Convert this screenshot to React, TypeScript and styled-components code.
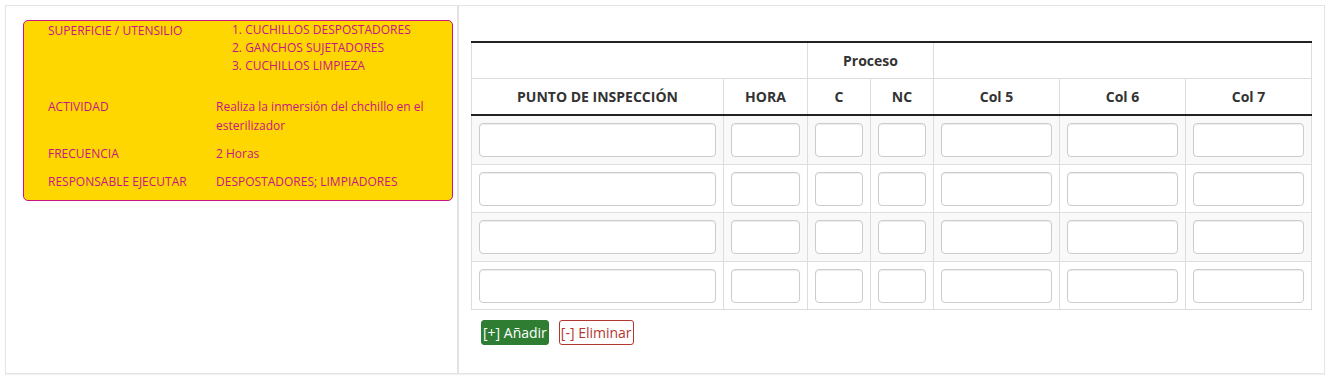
import styled, { createGlobalStyle } from "styled-components";

const GlobalStyle = createGlobalStyle`
  html, body {
    margin: 0;
    padding: 0;
    background: #fff;
  }

  body {
    font-family: "Open Sans", "Liberation Sans", sans-serif;
    color: #333;
  }

  * {
    box-sizing: border-box;
  }
`;

const Page = styled.div`
  display: flex;
  align-items: stretch;
  padding: 5px;
  width: 1331px;
`;

const Panel = styled.section<{ $width: number }>`
  flex: 0 0 ${(p) => p.$width}px;
  border: 1px solid #e4e4e4;
  box-shadow: 0 1px 1px rgba(0, 0, 0, 0.06);
  background: #fff;
`;

const LeftPanel = styled(Panel)`
  padding: 14px 4px 0 17px;
`;

const RightPanel = styled(Panel)`
  padding: 35px 12px 28px 12px;
`;

const InfoCard = styled.div`
  display: grid;
  grid-template-columns: 168px 1fr;
  row-gap: 9px;
  padding: 0 20px 9px 24px;
  background: #ffd700;
  border: 1px solid #c71585;
  border-radius: 5px;
  color: #c71585;
  font-size: 12px;
  line-height: 19px;
`;

const InfoLabel = styled.div`
  text-transform: uppercase;
`;

const InfoValue = styled.div``;

const ItemList = styled.ol`
  margin: 0 0 13px 0;
  padding: 0 0 0 16px;
  list-style-position: inside;
  line-height: 18px;
`;

const Table = styled.table`
  width: 100%;
  border-collapse: collapse;
  table-layout: fixed;
`;

const HeadCell = styled.th`
  padding: 8px;
  line-height: 19px;
  font-size: 14px;
  font-weight: 700;
  color: #333;
  text-align: center;
  border: 1px solid #ddd;
`;

const HeadRow = styled.tr<{ $first?: boolean }>`
  & > th {
    ${(p) => (p.$first ? "border-top: 2px solid #222;" : "border-bottom: 2px solid #222;")}
  }
`;

const BodyRow = styled.tr`
  &:nth-child(odd) {
    background: #f9f9f9;
  }
`;

const BodyCell = styled.td`
  padding: 7px 7px 6.5px;
  border: 1px solid #ddd;
`;

const Field = styled.input`
  display: block;
  width: 100%;
  height: 34px;
  padding: 6px 10px;
  border: 1px solid #ccc;
  border-radius: 4px;
  background: #fff;
  box-shadow: inset 0 1px 1px rgba(0, 0, 0, 0.075);
  font: inherit;
`;

const Actions = styled.div`
  display: flex;
  gap: 10px;
  margin: 10px 0 0 10px;
`;

const ActionButton = styled.button<{ $variant: "add" | "remove" }>`
  height: 25px;
  padding: 0 1px;
  border-radius: 3px;
  font-family: "Open Sans", "Liberation Sans", sans-serif;
  font-size: 14px;
  line-height: 23px;
  cursor: pointer;
  border: 1px solid ${(p) => (p.$variant === "add" ? "#2e7d32" : "#b3372f")};
  background: ${(p) => (p.$variant === "add" ? "#2e7d32" : "#fff")};
  color: ${(p) => (p.$variant === "add" ? "#fff" : "#b3372f")};
`;

const info = [
  { label: "ACTIVIDAD", value: "Realiza la inmersión del chchillo en el esterilizador" },
  { label: "FRECUENCIA", value: "2 Horas" },
  { label: "RESPONSABLE EJECUTAR", value: "DESPOSTADORES; LIMPIADORES" },
];

const items = ["CUCHILLOS DESPOSTADORES", "GANCHOS SUJETADORES", "CUCHILLOS LIMPIEZA"];

const columns = [
  { title: "PUNTO DE INSPECCIÓN", width: "30%" },
  { title: "HORA", width: "10%" },
  { title: "C", width: "7.5%" },
  { title: "NC", width: "7.5%" },
  { title: "Col 5", width: "15%" },
  { title: "Col 6", width: "15%" },
  { title: "Col 7", width: "15%" },
];

const App = () => {
  return (
    <>
      <GlobalStyle />
      <Page>
        <LeftPanel $width={453}>
          <InfoCard>
            <InfoLabel>SUPERFICIE / UTENSILIO</InfoLabel>
            <InfoValue>
              <ItemList>
                {items.map((item) => (
                  <li key={item}>{item}</li>
                ))}
              </ItemList>
            </InfoValue>
            {info.map((row) => [
              <InfoLabel key={`${row.label}-l`}>{row.label}</InfoLabel>,
              <InfoValue key={`${row.label}-v`}>{row.value}</InfoValue>,
            ])}
          </InfoCard>
        </LeftPanel>

        <RightPanel $width={867}>
          <Table>
            <colgroup>
              {columns.map((col) => (
                <col key={col.title} style={{ width: col.width }} />
              ))}
            </colgroup>
            <thead>
              <HeadRow $first>
                <HeadCell colSpan={2} />
                <HeadCell colSpan={2}>Proceso</HeadCell>
                <HeadCell colSpan={3} />
              </HeadRow>
              <HeadRow>
                {columns.map((col) => (
                  <HeadCell key={col.title}>{col.title}</HeadCell>
                ))}
              </HeadRow>
            </thead>
            <tbody>
              {Array.from({ length: 4 }, (v, i) => (
                <BodyRow key={`row-${i}`}>
                  {columns.map((col) => (
                    <BodyCell key={col.title}>
                      <Field type="text" />
                    </BodyCell>
                  ))}
                </BodyRow>
              ))}
            </tbody>
          </Table>
          <Actions>
            <ActionButton $variant="add">[+] Añadir</ActionButton>
            <ActionButton $variant="remove">[-] Eliminar</ActionButton>
          </Actions>
        </RightPanel>
      </Page>
    </>
  );
};

export default App;
